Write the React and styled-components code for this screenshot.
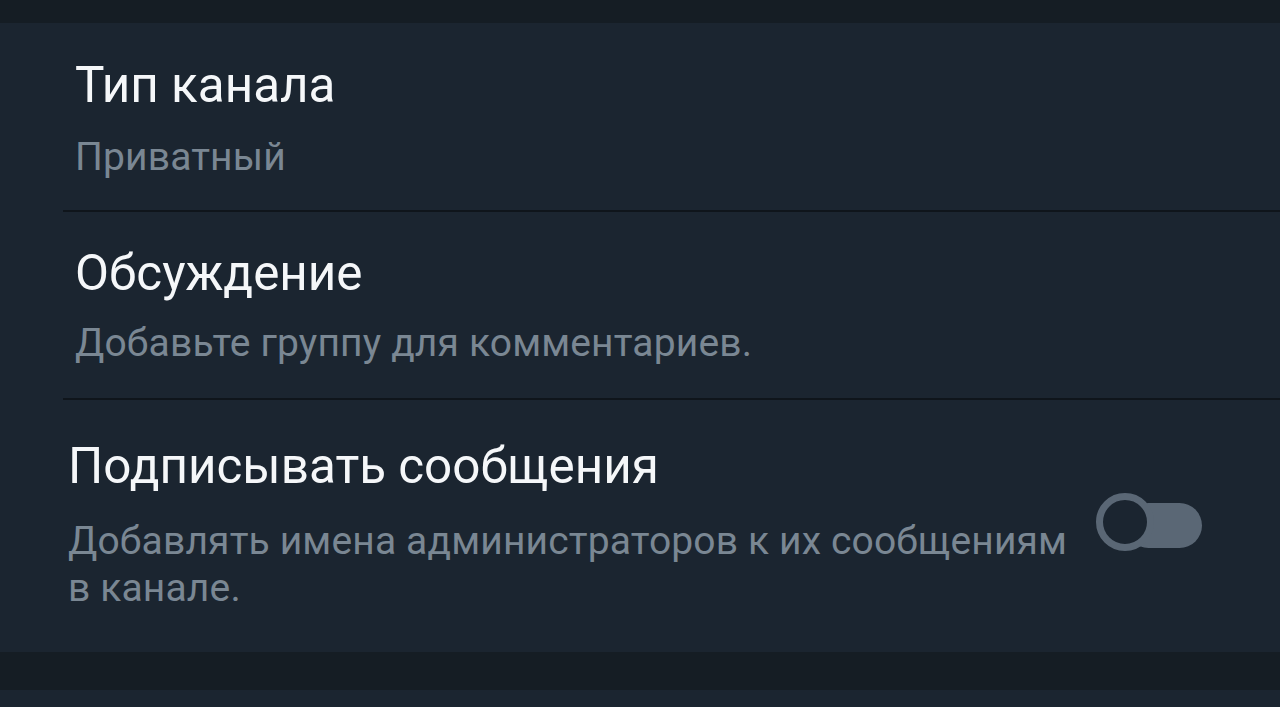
import React from 'react';
import styled, { createGlobalStyle } from 'styled-components';

const Global = createGlobalStyle`
  html, body {
    margin: 0;
    padding: 0;
    background: #151d24;
  }
  body {
    font-family: Roboto, "Noto Sans", sans-serif;
  }
`;

const Screen = styled.div`
  width: 1280px;
  height: 707px;
  overflow: hidden;
  background: #151d24;
  display: flex;
  flex-direction: column;
`;

const TopStrip = styled.div`
  height: 23px;
  flex: none;
`;

const Panel = styled.section`
  background: #1b2530;
  display: flex;
  flex-direction: column;
  flex: none;
`;

// rows with a divider start the line at x=63, text sits a bit further in
const Item = styled.div`
  display: flex;
  align-items: flex-start;
  height: ${p => p.$h}px;
  box-sizing: border-box;
  padding-top: ${p => p.$top}px;
  margin-left: ${p => (p.$divider ? 63 : 0)}px;
  padding-left: ${p => (p.$divider ? 12 : p.$indent)}px;
  border-bottom: ${p => (p.$divider ? '2px solid #0f151b' : 'none')};
`;

const Texts = styled.div`
  flex: 1;
  display: flex;
  flex-direction: column;
`;

const Title = styled.div`
  color: #f5f7f9;
  font-size: 49.4px;
  line-height: 58px;
`;

const Sub = styled.div`
  color: #7a8793;
  font-size: 39px;
  line-height: 47px;
  letter-spacing: 0.15px;
  margin-top: ${p => p.$gap}px;
`;

const Switch = styled.div`
  position: relative;
  width: 106px;
  height: 58px;
  margin: ${p => p.$top}px 78px 0 0;
  flex: none;
`;

const Track = styled.div`
  position: absolute;
  left: 30px;
  right: 0;
  top: 10px;
  height: 45px;
  border-radius: 23px;
  background: #5a6775;
`;

const Thumb = styled.div`
  position: absolute;
  left: 0;
  top: 0;
  width: 58px;
  height: 58px;
  box-sizing: border-box;
  border-radius: 50%;
  border: 7px solid #5a6775;
  background: #1b2530;
`;

const Gap = styled.div`
  height: 38px;
  flex: none;
`;

const BottomPanel = styled.div`
  flex: 1;
  background: #1b2530;
`;

export default function App() {
  return (
    <Screen>
      <Global />
      <TopStrip />
      <Panel>
        <Item $h={189} $top={33} $divider>
          <Texts>
            <Title>Тип канала</Title>
            <Sub $gap={20}>Приватный</Sub>
          </Texts>
        </Item>
        <Item $h={188} $top={32} $divider>
          <Texts>
            <Title>Обсуждение</Title>
            <Sub $gap={18}>Добавьте группу для комментариев.</Sub>
          </Texts>
        </Item>
        <Item $h={252} $top={37} $indent={68}>
          <Texts>
            <Title>Подписывать сообщения</Title>
            <Sub $gap={23}>
              Добавлять имена администраторов к их сообщениям
              <br />
              в канале.
            </Sub>
          </Texts>
          <Switch $top={56}>
            <Track />
            <Thumb />
          </Switch>
        </Item>
      </Panel>
      <Gap />
      <BottomPanel />
    </Screen>
  );
}
